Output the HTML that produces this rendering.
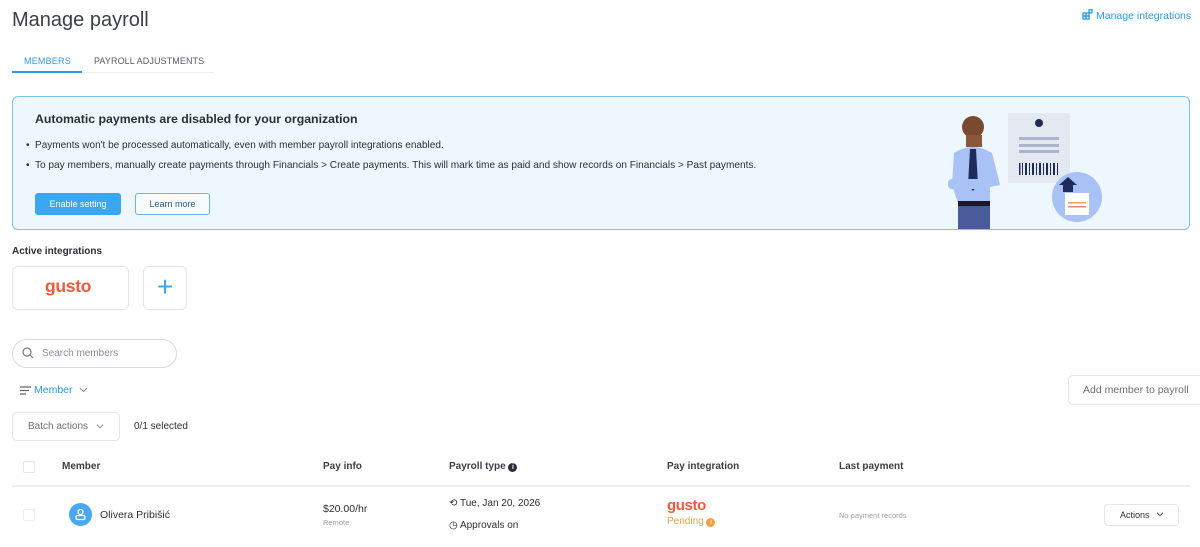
<!DOCTYPE html>
<html><head><meta charset="utf-8"><style>
*{box-sizing:border-box;margin:0;padding:0}
body{width:1200px;height:547px;overflow:hidden;background:#fff;font-family:"Liberation Sans",sans-serif;color:#2a2f37;position:relative}
.a{position:absolute;white-space:nowrap}
.btn{position:absolute;border:1px solid #e3e5e8;border-radius:4px;background:#fff}
</style></head><body>
<div class="a" style="left:12px;top:9px;font-size:20px;color:#3b4048">Manage payroll</div>
<div class="a" style="left:1082px;top:9px;font-size:10.5px;color:#2e98e6">
<svg width="11" height="11" viewBox="0 0 11 11" style="vertical-align:-1px;margin-right:3px" fill="none" stroke="#2e98e6" stroke-width="1.3"><rect x="1" y="4" width="3" height="3"/><rect x="4" y="7" width="3" height="3"/><rect x="1" y="7" width="3" height="3"/><rect x="4" y="4" width="3" height="3"/><rect x="7" y="0.8" width="3" height="3"/></svg>Manage integrations</div>
<div class="a" style="left:24px;top:56px;font-size:9px;color:#2e98e6;letter-spacing:.2px">MEMBERS</div>
<div class="a" style="left:94px;top:56px;font-size:9px;color:#555b63;letter-spacing:.1px">PAYROLL ADJUSTMENTS</div>
<div class="a" style="left:12px;top:72px;width:202px;height:1px;background:#eceef0"></div>
<div class="a" style="left:12px;top:71px;width:70px;height:2px;background:#2e98e6"></div>

<div class="a" style="left:12px;top:96px;width:1178px;height:134px;background:#eef7fd;border:1px solid #7cc3e8;border-radius:6px"></div>
<div class="a" style="left:35px;top:112px;font-size:12.3px;font-weight:bold;color:#2a2f37">Automatic payments are disabled for your organization</div>
<div class="a" style="left:26px;top:140px;font-size:10px;color:#2a2f37">•&nbsp; Payments won't be processed automatically, even with member payroll integrations enabled.</div>
<div class="a" style="left:26px;top:160px;font-size:10.1px;color:#2a2f37">•&nbsp; To pay members, manually create payments through Financials &gt; Create payments. This will mark time as paid and show records on Financials &gt; Past payments.</div>
<div class="a" style="left:35px;top:193px;width:86px;height:22px;background:#3aa7f3;border-radius:3px;color:#fff;font-size:9px;text-align:center;line-height:22px">Enable setting</div>
<div class="a" style="left:135px;top:193px;width:75px;height:22px;border:1px solid #6ab4e6;border-radius:3px;color:#2a5c86;font-size:9px;text-align:center;line-height:20px;background:#f7fbfe">Learn more</div>
<svg class="a" style="left:940px;top:105px" width="170" height="124" viewBox="0 0 170 124">
<rect x="68" y="8" width="62" height="70" fill="#e4e8f0"/>
<circle cx="99" cy="18" r="4" fill="#1f2b5a"/>
<rect x="79" y="32" width="40" height="3" fill="#a9b4cd"/><rect x="79" y="39" width="40" height="3" fill="#a9b4cd"/><rect x="79" y="45" width="40" height="3" fill="#a9b4cd"/>
<g fill="#1f2b5a"><rect x="79" y="58" width="1.5" height="12"/><rect x="82" y="58" width="1" height="12"/><rect x="85" y="58" width="2" height="12"/><rect x="89" y="58" width="1" height="12"/><rect x="92" y="58" width="2" height="12"/><rect x="96" y="58" width="1" height="12"/><rect x="99" y="58" width="2" height="12"/><rect x="103" y="58" width="1" height="12"/><rect x="106" y="58" width="2" height="12"/><rect x="110" y="58" width="1" height="12"/><rect x="113" y="58" width="2" height="12"/><rect x="117" y="58" width="1" height="12"/></g>
<circle cx="137" cy="92" r="25" fill="#a9c2f5"/>
<path d="M128 72 L137 80 L133 80 L133 87 L123 87 L123 80 L119 80 Z" fill="#1f2b5a"/>
<rect x="125" y="88" width="24" height="22" fill="#fff"/><rect x="128" y="97" width="18" height="1.5" fill="#f0a05a"/><rect x="128" y="101" width="18" height="1.5" fill="#f08080"/>
<circle cx="33" cy="22" r="11" fill="#7a4a30"/>
<rect x="26" y="30" width="16" height="12" fill="#8a5838"/>
<path d="M14 48 Q33 36 52 48 L60 80 L50 82 L50 98 L18 98 L12 80 Z" fill="#a9c2f5"/>
<path d="M30 44 L36 44 L38 80 L33 86 L28 80 Z" fill="#1f2b5a"/>
<rect x="8" y="74" width="40" height="10" rx="4" fill="#a9c2f5"/>
<rect x="18" y="96" width="32" height="5" fill="#1a1a1a"/>
<rect x="18" y="101" width="32" height="23" fill="#4a5b9a"/>
</svg>

<div class="a" style="left:12px;top:246px;font-size:10px;font-weight:bold">Active integrations</div>
<div class="btn" style="left:12px;top:266px;width:117px;height:44px;border-radius:6px"></div>
<div class="a" style="left:45px;top:276px;font-size:17.5px;font-weight:bold;color:#ef5a3c;letter-spacing:-0.3px">gusto</div>
<div class="btn" style="left:143px;top:266px;width:44px;height:44px;border-radius:6px;text-align:center;line-height:40px;font-size:28px;color:#3aa7f3;font-weight:300">+</div>

<div class="a" style="left:12px;top:339px;width:165px;height:29px;border:1px solid #d8dbdf;border-radius:15px"></div>
<svg class="a" style="left:22px;top:347px" width="12" height="12" viewBox="0 0 12 12" fill="none" stroke="#777" stroke-width="1.2"><circle cx="5" cy="5" r="4"/><path d="M8 8l3 3"/></svg>
<div class="a" style="left:42px;top:348px;font-size:10px;color:#8a8f96">Search members</div>

<svg class="a" style="left:20px;top:386px" width="11" height="9" viewBox="0 0 11 9" stroke="#666" stroke-width="1.2"><path d="M0 1h11M0 4.5h9M0 8h6"/></svg>
<div class="a" style="left:34px;top:384px;font-size:10.5px;color:#2e98e6">Member</div>
<svg class="a" style="left:79px;top:387px" width="9" height="6" viewBox="0 0 9 6" fill="none" stroke="#888" stroke-width="1.1"><path d="M1 1l3.5 3.5L8 1"/></svg>
<div class="btn" style="left:1068px;top:375px;width:135px;height:30px;border-radius:5px;font-size:10.5px;color:#6a7078;line-height:28px;padding-left:14px">Add member to payroll</div>

<div class="btn" style="left:12px;top:412px;width:108px;height:29px;border-radius:5px;font-size:10px;color:#6a7078;line-height:27px;padding-left:15px">Batch actions</div>
<svg class="a" style="left:96px;top:424px" width="8" height="5" viewBox="0 0 9 6" fill="none" stroke="#888" stroke-width="1.1"><path d="M1 1l3.5 3.5L8 1"/></svg>
<div class="a" style="left:134px;top:421px;font-size:10px;color:#2a2f37">0/1 selected</div>

<div class="a" style="left:23px;top:461px;width:12px;height:12px;border:1px solid #e3e5e8;border-radius:2px"></div>
<div class="a" style="left:62px;top:461px;font-size:10px;font-weight:bold;color:#3b4048">Member</div>
<div class="a" style="left:323px;top:461px;font-size:10px;font-weight:bold;color:#3b4048">Pay info</div>
<div class="a" style="left:449px;top:461px;font-size:10px;font-weight:bold;color:#3b4048">Payroll type <span style="display:inline-block;width:9px;height:9px;border-radius:50%;background:#2a2f37;color:#fff;font-size:7px;text-align:center;line-height:9px;vertical-align:0">i</span></div>
<div class="a" style="left:667px;top:461px;font-size:10px;font-weight:bold;color:#3b4048">Pay integration</div>
<div class="a" style="left:839px;top:461px;font-size:10px;font-weight:bold;color:#3b4048">Last payment</div>
<div class="a" style="left:12px;top:485px;width:1178px;height:2px;background:#eceef0"></div>

<div class="a" style="left:23px;top:509px;width:12px;height:12px;border:1px solid #eceef0;border-radius:2px"></div>
<div class="a" style="left:69px;top:503px;width:23px;height:23px;border-radius:50%;background:#4aa8f0"></div>
<svg class="a" style="left:74px;top:508px" width="13" height="13" viewBox="0 0 13 13" fill="none" stroke="#fff" stroke-width="1.3"><circle cx="6.5" cy="4" r="2.5"/><rect x="2" y="7.5" width="9" height="4" rx="1.5"/></svg>
<div class="a" style="left:100px;top:509px;font-size:10.5px;color:#2a2f37">Olivera Pribišić</div>
<div class="a" style="left:323px;top:503px;font-size:10.5px;color:#2a2f37">$20.00/hr</div>
<div class="a" style="left:323px;top:518px;font-size:7.5px;color:#9aa0a6">Remote</div>
<div class="a" style="left:449px;top:498px;font-size:10px;color:#2a2f37">⟲ Tue, Jan 20, 2026</div>
<div class="a" style="left:449px;top:520px;font-size:10px;color:#2a2f37">◷ Approvals on</div>
<div class="a" style="left:667px;top:497px;font-size:15px;font-weight:bold;color:#ef5a3c;letter-spacing:-0.4px">gusto</div>
<div class="a" style="left:667px;top:516px;font-size:10px;color:#f0a040">Pending <span style="display:inline-block;width:9px;height:9px;border-radius:50%;background:#f0a040;color:#fff;font-size:7px;text-align:center;line-height:9px">i</span></div>
<div class="a" style="left:839px;top:511px;font-size:7.5px;color:#9aa0a6">No payment records</div>
<div class="btn" style="left:1104px;top:504px;width:75px;height:22px;font-size:9px;color:#2a2f37;line-height:20px;padding-left:15px">Actions</div>
<svg class="a" style="left:1156px;top:512px" width="8" height="5" viewBox="0 0 9 6" fill="none" stroke="#444" stroke-width="1.1"><path d="M1 1l3.5 3.5L8 1"/></svg>
</body></html>
